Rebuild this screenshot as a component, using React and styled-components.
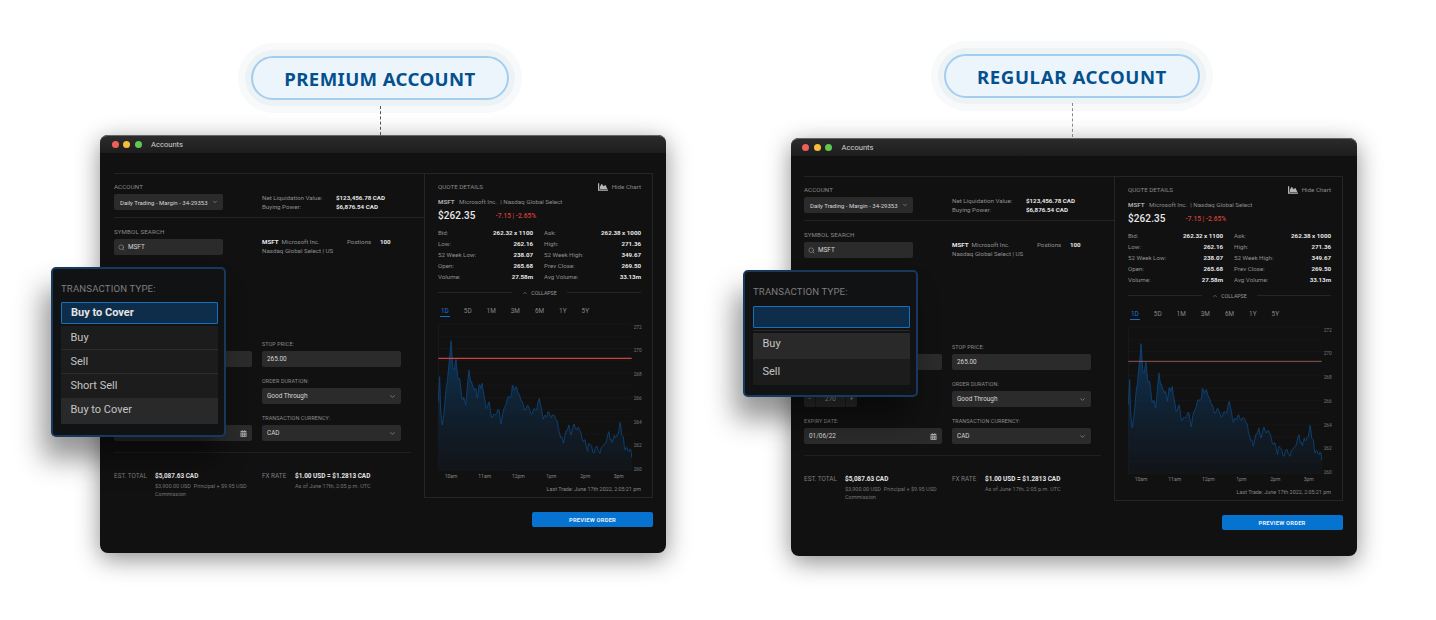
import React from "react";
import styled, { createGlobalStyle } from "styled-components";
import { ChevronDown, ChevronUp, Search } from "lucide-react";
import { FaCalendarAlt, FaChartArea } from "react-icons/fa";

const Global = createGlobalStyle`
  html, body { margin: 0; padding: 0; background: #fff; }
  body { font-family: Roboto, "Liberation Sans", sans-serif; }
`;

const Canvas = styled.div`
  position: relative;
  width: 1436px;
  height: 620px;
  overflow: hidden;
  background: #fff;
`;

const Callout = styled.div`
  position: absolute;
  left: ${(p) => p.$x}px;
  top: ${(p) => p.$y}px;
  width: ${(p) => p.$w}px;
  display: flex;
  flex-direction: column;
  align-items: center;
`;
const Pill = styled.div`
  box-sizing: border-box;
  width: 100%;
  height: 44px;
  display: flex;
  align-items: center;
  justify-content: center;
  border: 2px solid #a3cef0;
  border-radius: 22px;
  background: #edf5fc;
  box-shadow: 0 0 0 6px #edf2f5, 0 0 0 13px #f8f9fa;
  color: #04508e;
  font-family: "Noto Sans", sans-serif;
  font-weight: 700;
  font-size: 18.6px;
  letter-spacing: ${(p) => p.$ls}px;
`;
const Connector = styled.div`
  height: ${(p) => p.$h}px;
  margin-top: ${(p) => p.$mt}px;
  border-left: 1px dashed ${(p) => p.$c};
`;

const Win = styled.div`
  position: absolute;
  left: ${(p) => p.$x}px;
  top: ${(p) => p.$y}px;
  width: 566px;
  height: 418px;
  display: flex;
  flex-direction: column;
  background: #111112;
  border-radius: 8px;
  box-shadow: 0 6px 24px rgba(0, 0, 0, 0.45);
  color: #ddd;
`;
const TitleBar = styled.div`
  height: 18px;
  flex: none;
  display: flex;
  align-items: center;
  padding-left: 11.5px;
  gap: 4.5px;
  background: linear-gradient(#2b2b2c, #1d1d1e);
  border-radius: 8px 8px 0 0;
  border-top: 0.5px solid #666;
  box-sizing: border-box;
`;
const Dot = styled.span`
  width: 7px;
  height: 7px;
  border-radius: 50%;
  background: ${(p) => p.$c};
`;
const Title = styled.span`
  margin-left: 5px;
  font-size: 7.6px;
  color: #d0d0d0;
`;
const WinBody = styled.div`
  display: grid;
  grid-template-columns: 310px 229px;
  padding: 20px 0 0 ${(p) => p.$inset}px;
`;
const LeftCol = styled.div`
  border-top: 1px solid #232324;
`;
const AccountRow = styled.div`
  height: 44px;
  box-sizing: border-box;
  padding-top: 9px;
  display: grid;
  grid-template-columns: 148px 1fr;
  border-bottom: 1px solid #232324;
`;
const SymbolRow = styled.div`
  height: 122px;
  box-sizing: border-box;
  padding-top: 10px;
  display: grid;
  grid-template-columns: 148px 1fr;
  align-content: start;
`;
const Label = styled.div`
  font-size: ${(p) => (p.$small ? 5.4 : 6.2)}px;
  line-height: 8px;
  height: 8px;
  color: #8a8a8a;
  letter-spacing: 0.1px;
  white-space: nowrap;
`;
const Control = styled.div`
  box-sizing: border-box;
  width: ${(p) => p.$w || "100%"};
  height: 16px;
  margin-top: 3px;
  display: flex;
  align-items: center;
  justify-content: space-between;
  padding: 0 5px 0 ${(p) => p.$pl ?? 5}px;
  background: #2b2b2c;
  border-radius: 2px;
  font-size: ${(p) => p.$fs ?? 6.4}px;
  color: #d6d6d6;
  white-space: nowrap;
`;
const SearchValue = styled.span`
  display: flex;
  align-items: center;
  gap: 3px;
`;
const Figures = styled.div`
  padding-top: 10px;
  display: grid;
  grid-template-columns: 74px 1fr;
  grid-auto-rows: 9px;
  align-items: center;
  font-size: 6.2px;
`;
const Muted = styled.span`
  color: #8f8f8f;
`;
const Strong = styled.span`
  color: #e6e6e6;
  font-weight: 700;
`;
const Instrument = styled.div`
  padding-top: 9px;
  display: grid;
  grid-template-columns: 85px 33px 1fr;
  grid-auto-rows: 9px;
  align-items: center;
  font-size: 6.2px;
  white-space: nowrap;
`;
const SecondLine = styled.span`
  grid-column: 1 / 2;
  color: #8f8f8f;
`;
const FormGrid = styled.div`
  display: grid;
  grid-template-columns: 138px 139px;
  column-gap: 10px;
  row-gap: 10px;
  padding-bottom: 11px;
  width: 297px;
  border-bottom: 1px solid #1f1f20;
`;
const Stepper = styled.div`
  display: grid;
  grid-template-columns: 11px 1fr 11px;
  width: 53px;
  height: 16px;
  margin-top: 3px;
  background: #2b2b2c;
  border-radius: 2px;
  font-size: 6.4px;
  color: #aaa;
  text-align: center;
  line-height: 16px;
`;
const StepValue = styled.span`
  border-left: 1px solid #1c1c1c;
  border-right: 1px solid #1c1c1c;
`;
const Totals = styled.div`
  display: grid;
  grid-template-columns: 41px 107px 33px 1fr;
  padding-top: 19px;
  width: 297px;
`;
const TotalLabel = styled.div`
  font-size: 6.4px;
  line-height: 8px;
  color: #7d7d7d;
`;
const TotalBlock = styled.div`
  font-size: 6.4px;
  line-height: 8px;
`;
const Fine = styled.div`
  margin-top: 2px;
  font-size: 5.5px;
  line-height: 8px;
  color: #757575;
  width: ${(p) => p.$w || "auto"};
`;

const Quote = styled.div`
  box-sizing: border-box;
  height: 325px;
  border: 1px solid #252526;
  padding: 9px 11px 0 13px;
  display: flex;
  flex-direction: column;
`;
const QuoteHead = styled.div`
  display: flex;
  justify-content: space-between;
  align-items: center;
  height: 8px;
  font-size: 6.2px;
  color: #8a8a8a;
`;
const HideChart = styled.span`
  display: flex;
  align-items: center;
  gap: 4px;
  font-size: 6.2px;
  color: #8a8a8a;
  svg {
    color: #b5b5b5;
  }
`;
const QuoteSymbol = styled.div`
  margin-top: 7px;
  height: 8px;
  line-height: 8px;
  font-size: 6.2px;
  color: #8c8c8c;
  white-space: nowrap;
  b {
    color: #aaa;
    margin-right: 3px;
  }
`;
const PriceLine = styled.div`
  margin-top: 3px;
  height: 13px;
  display: flex;
  align-items: center;
  gap: 20px;
`;
const Price = styled.span`
  font-size: 10px;
  font-weight: 500;
  color: #e8e8e8;
  letter-spacing: 0.1px;
`;
const Change = styled.span`
  font-size: 6.6px;
  font-weight: 500;
  color: #d8403c;
`;
const Stats = styled.div`
  margin-top: 5px;
  display: grid;
  grid-template-columns: 95px 97px;
  column-gap: 11px;
  grid-auto-rows: 11px;
  font-size: 6.2px;
`;
const Stat = styled.div`
  display: flex;
  justify-content: space-between;
  align-items: center;
  white-space: nowrap;
`;
const CollapseBar = styled.div`
  margin-top: 6.5px;
  height: 8px;
  display: flex;
  align-items: center;
  gap: 10px;
  font-size: 5.2px;
  color: #9a9a9a;
  &::before,
  &::after {
    content: "";
    flex: 1;
    height: 1px;
    background: #252526;
  }
`;
const CollapseText = styled.span`
  display: flex;
  align-items: center;
  gap: 3px;
`;
const Tabs = styled.div`
  margin: 10.5px 0 0 2px;
  display: flex;
  gap: 13px;
`;
const Tab = styled.span`
  font-size: 6.4px;
  line-height: 8px;
  padding: 0 1px 1px;
  color: ${(p) => (p.$on ? "#1b78d0" : "#888")};
  border-bottom: 1.2px solid ${(p) => (p.$on ? "#0f6fc6" : "transparent")};
`;
const ChartWrap = styled.svg`
  display: block;
  margin-top: 5px;
  flex: none;
`;
const LastTrade = styled.div`
  margin-top: 3px;
  text-align: right;
  font-size: 5.4px;
  line-height: 8px;
  color: #858585;
`;
const Footer = styled.div`
  display: flex;
  justify-content: flex-end;
  padding: 14px ${(p) => p.$inset}px 0 0;
`;
const Preview = styled.button`
  width: 121px;
  height: 15px;
  padding: 0;
  border: 0;
  border-radius: 2px;
  background: #0573cf;
  color: #e4f0fb;
  font-family: inherit;
  font-size: 5.8px;
  font-weight: 700;
  letter-spacing: 0.2px;
`;

const Popup = styled.div`
  position: absolute;
  left: ${(p) => p.$x}px;
  top: 132px;
  box-sizing: border-box;
  width: 175px;
  height: ${(p) => p.$h}px;
  padding: ${(p) => p.$pt}px 6px 0 8px;
  background: #111214;
  border: 2px solid #173a5c;
  border-radius: 5px;
  box-shadow: -8px 22px 28px rgba(0, 0, 0, 0.42);
`;
const PopupTitle = styled.div`
  font-size: 9.6px;
  line-height: 12px;
  color: #7e7e7e;
  letter-spacing: 0.15px;
  white-space: nowrap;
`;
const Chosen = styled.div`
  box-sizing: border-box;
  height: 22px;
  margin-top: ${(p) => p.$mt}px;
  padding-left: 9px;
  display: flex;
  align-items: center;
  background: #0e2d4a;
  border: 1px solid #1870bb;
  border-radius: 1px;
  font-size: 11px;
  font-weight: 700;
  color: #e4e4e4;
`;
const Options = styled.div`
  margin-top: 2px;
  border-radius: 1px;
  overflow: hidden;
  ${(p) => p.$rule && "border-top: 1px solid #2a2a2a; padding-top: 2px;"}
`;
const Option = styled.div`
  box-sizing: border-box;
  height: ${(p) => p.$h}px;
  padding: 0 0 ${(p) => p.$lift ?? 0}px 9.5px;
  display: flex;
  align-items: center;
  background: ${(p) => (p.$hi ? "#292929" : "#1c1c1d")};
  border-bottom: ${(p) => (p.$line ? "1px solid #2c2c2d" : "0")};
  font-size: 11px;
  color: #c4c4c4;
`;

const trace = [[40,245],[44,170],[47,270],[52,315],[57,280],[62,220],[67,185],[72,130],[78,62],[83,140],[88,150],[93,118],[98,170],[104,175],[110,230],[114,240],[118,235],[122,255],[127,200],[132,150],[137,185],[142,195],[147,205],[152,205],[157,235],[162,195],[167,205],[172,190],[177,225],[183,265],[188,258],[193,247],[198,285],[203,290],[208,283],[215,280],[222,270],[228,312],[233,280],[240,260],[246,240],[252,232],[258,230],[262,195],[267,210],[272,200],[278,215],[285,230],[292,245],[298,270],[304,265],[310,258],[316,275],[322,280],[328,265],[335,270],[343,235],[350,270],[355,298],[360,285],[366,290],[371,275],[376,290],[382,285],[390,290],[395,300],[400,325],[405,345],[410,350],[415,370],[420,345],[425,335],[432,315],[438,345],[447,312],[455,330],[462,325],[468,340],[475,365],[480,360],[488,395],[492,370],[500,380],[507,400],[515,378],[525,400],[532,380],[540,370],[546,355],[552,335],[556,360],[562,368],[568,345],[574,350],[580,340],[585,307],[590,345],[595,350],[600,390],[606,383],[612,395],[618,390],[620,412]];

const jagged = trace.flatMap(([x, y], i) => {
  const next = trace[i + 1];
  if (!next) return [[x, y]];
  const mx = (x + next[0]) / 2;
  const my = (y + next[1]) / 2 + ((i * 7) % 5 - 2) * 3;
  return [[x, y], [mx, my]];
});
const linePts = jagged.map((p) => p.join(",")).join(" ");
const areaPts = `40,452 ${linePts} 620,452`;
const yLabels = [[272,27],[270,97],[268,169],[266,240],[264,311],[262,382],[260,452]];
const xLabels = [["10am",78],["11am",179],["12pm",280],["1pm",379],["2pm",481],["3pm",581]];
const gridYs = Array.from({ length: 13 }, (_, i) => 12 + i * 36.67);

function PriceChart({ id, level, levelWidth }) {
  return (
    <ChartWrap width="207" height="160" viewBox="39 6 621 480">
      <defs>
        <linearGradient id={id} x1="0" y1="0" x2="0" y2="1">
          <stop offset="0%" stopColor="#0d3a62" stopOpacity="0.9" />
          <stop offset="100%" stopColor="#121820" stopOpacity="0.5" />
        </linearGradient>
      </defs>
      {gridYs.map((y) => (
        <line key={y} x1="40" x2="620" y1={y} y2={y} stroke="#1a1a1b" strokeWidth="2" />
      ))}
      <line x1="40" x2="40" y1="12" y2="452" stroke="#1f1f20" strokeWidth="2" />
      <polygon points={areaPts} fill={`url(#${id})`} />
      <polyline points={linePts} fill="none" stroke="#0d4478" strokeWidth="2.6" strokeLinejoin="round" />
      <line x1="40" x2="620" y1="115" y2="115" stroke={level} strokeWidth={levelWidth} />
      {yLabels.map(([t, y]) => (
        <text key={t} x="626" y={y} fontSize="14.5" fill="#777" fontFamily="Roboto, sans-serif">{t}</text>
      ))}
      {xLabels.map(([t, x]) => (
        <text key={t} x={x} y="473" fontSize="15" fill="#858585" textAnchor="middle" fontFamily="Roboto, sans-serif">{t}</text>
      ))}
    </ChartWrap>
  );
}

const statRows = [
  ["Bid:", "262.32 x 1100", "Ask:", "262.38 x 1000"],
  ["Low:", "262.16", "High:", "271.36"],
  ["52 Week Low:", "238.07", "52 Week High:", "349.67"],
  ["Open:", "265.68", "Prev Close:", "269.50"],
  ["Volume:", "27.58m", "Avg Volume:", "33.13m"],
];
const ranges = ["1D", "5D", "1M", "3M", "6M", "1Y", "5Y"];

function Select({ value }) {
  return (
    <Control>
      {value}
      <ChevronDown size={7} color="#aaa" />
    </Control>
  );
}

function AccountWindow({ x, y, inset, footerInset, id, level, levelWidth, lowerVisible, children }) {
  return (
    <Win $x={x} $y={y}>
      <TitleBar>
        <Dot $c="#ee5f57" />
        <Dot $c="#f6bd3b" />
        <Dot $c="#5fc84f" />
        <Title>Accounts</Title>
      </TitleBar>
      <WinBody $inset={inset}>
        <LeftCol>
          <AccountRow>
            <div>
              <Label>ACCOUNT</Label>
              <Control $w="109px" $pl={6} $fs={6}>
                Daily Trading - Margin - 34-29353
                <ChevronDown size={6} color="#aaa" />
              </Control>
            </div>
            <Figures>
              <Muted>Net Liquidation Value:</Muted>
              <Strong>$123,456.78 CAD</Strong>
              <Muted>Buying Power:</Muted>
              <Strong>$6,876.54 CAD</Strong>
            </Figures>
          </AccountRow>
          <SymbolRow>
            <div>
              <Label>SYMBOL SEARCH</Label>
              <Control $w="109px" $pl={4}>
                <SearchValue>
                  <Search size={7} color="#999" />
                  MSFT
                </SearchValue>
              </Control>
            </div>
            <Instrument>
              <span>
                <Strong>MSFT</Strong>&nbsp; <Muted>Microsoft Inc.</Muted>
              </span>
              <Muted>Postions</Muted>
              <Strong>100</Strong>
              <SecondLine>Nasdaq Global Select | US</SecondLine>
            </Instrument>
          </SymbolRow>
          <FormGrid>
            <div>
              <Label $small />
              <Select />
            </div>
            <div>
              <Label $small>STOP PRICE:</Label>
              <Control>265.00</Control>
            </div>
            <div>
              <Label $small />
              {lowerVisible ? (
                <Stepper>
                  <span>−</span>
                  <StepValue>270</StepValue>
                  <span>+</span>
                </Stepper>
              ) : (
                <Stepper />
              )}
            </div>
            <div>
              <Label $small>ORDER DURATION:</Label>
              <Select value="Good Through" />
            </div>
            <div>
              <Label $small>{lowerVisible ? "EXPIRY DATE:" : ""}</Label>
              <Control>
                <span>{lowerVisible ? "01/06/22" : ""}</span>
                <FaCalendarAlt size={7} color="#a8a8a8" />
              </Control>
            </div>
            <div>
              <Label $small>TRANSACTION CURRENCY:</Label>
              <Select value="CAD" />
            </div>
          </FormGrid>
          <Totals>
            <TotalLabel>EST. TOTAL</TotalLabel>
            <TotalBlock>
              <Strong>$5,087.63 CAD</Strong>
              <Fine $w="96px">$3,900.00 USD&nbsp; Principal + $9.95 USD Commission</Fine>
            </TotalBlock>
            <TotalLabel>FX RATE</TotalLabel>
            <TotalBlock>
              <Strong>$1.00 USD = $1.2813 CAD</Strong>
              <Fine>As of June 17th, 2:05 p.m. UTC</Fine>
            </TotalBlock>
          </Totals>
        </LeftCol>
        <Quote>
          <QuoteHead>
            QUOTE DETAILS
            <HideChart>
              <FaChartArea size={10} />
              Hide Chart
            </HideChart>
          </QuoteHead>
          <QuoteSymbol>
            <b>MSFT</b> Microsoft Inc.&nbsp; | Nasdaq Global Select
          </QuoteSymbol>
          <PriceLine>
            <Price>$262.35</Price>
            <Change>-7.15 | -2.65%</Change>
          </PriceLine>
          <Stats>
            {statRows.map(([a, b, c, d]) => (
              <React.Fragment key={a}>
                <Stat>
                  <Muted>{a}</Muted>
                  <Strong>{b}</Strong>
                </Stat>
                <Stat>
                  <Muted>{c}</Muted>
                  <Strong>{d}</Strong>
                </Stat>
              </React.Fragment>
            ))}
          </Stats>
          <CollapseBar>
            <CollapseText>
              <ChevronUp size={6} />
              COLLAPSE
            </CollapseText>
          </CollapseBar>
          <Tabs>
            {ranges.map((r, i) => (
              <Tab key={r} $on={i === 0}>{r}</Tab>
            ))}
          </Tabs>
          <PriceChart id={id} level={level} levelWidth={levelWidth} />
          <LastTrade>Last Trade: June 17th 2022, 2:05:21 pm</LastTrade>
        </Quote>
      </WinBody>
      <Footer $inset={footerInset}>
        <Preview>PREVIEW ORDER</Preview>
      </Footer>
      {children}
    </Win>
  );
}

export default function App() {
  return (
    <Canvas>
      <Global />
      <AccountWindow x={100} y={135} inset={14} footerInset={13} id="premiumFill" level="#d0423c" levelWidth={3.4}>
        <Popup $x={-49} $h={170} $pt={14}>
          <PopupTitle>TRANSACTION TYPE:</PopupTitle>
          <Chosen $mt={6.5}>Buy to Cover</Chosen>
          <Options>
            <Option $h={24} $line>Buy</Option>
            <Option $h={24} $line>Sell</Option>
            <Option $h={24}>Short Sell</Option>
            <Option $h={26} $hi $lift={2}>Buy to Cover</Option>
          </Options>
        </Popup>
      </AccountWindow>
      <AccountWindow x={790.5} y={138} inset={13.5} footerInset={14} id="regularFill" level="#b0675d" levelWidth={2.4} lowerVisible>
        <Popup $x={-47.5} $h={127} $pt={14}>
          <PopupTitle>TRANSACTION TYPE:</PopupTitle>
          <Chosen $mt={8} />
          <Options $rule>
            <Option $h={26} $hi $lift={5}>Buy</Option>
            <Option $h={26} $lift={2}>Sell</Option>
          </Options>
        </Popup>
      </AccountWindow>
      <Callout $x={251} $y={56} $w={258}>
        <Pill $ls={0.38}>PREMIUM ACCOUNT</Pill>
        <Connector $h={29} $mt={6} $c="#555" />
      </Callout>
      <Callout $x={944} $y={54} $w={256}>
        <Pill $ls={0.62}>REGULAR ACCOUNT</Pill>
        <Connector $h={34} $mt={5} $c="#888" />
      </Callout>
    </Canvas>
  );
}
